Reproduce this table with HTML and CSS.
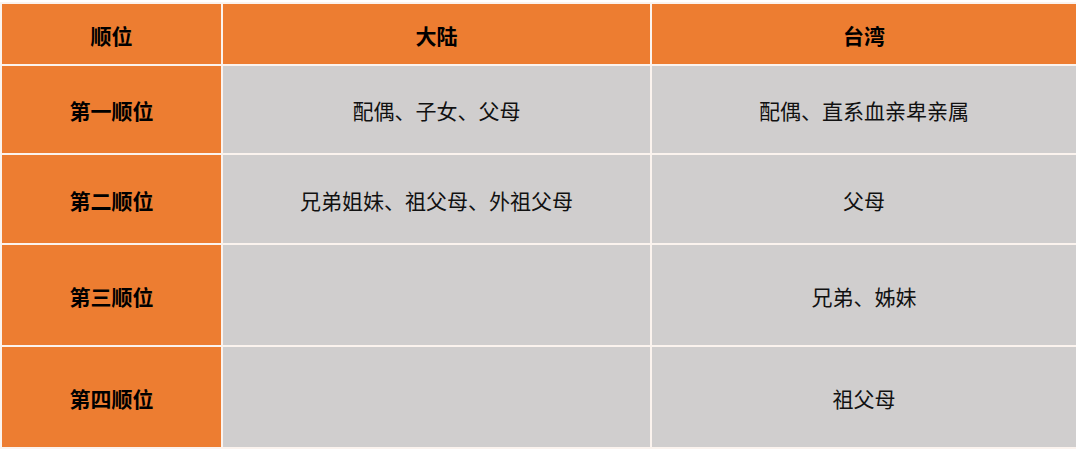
FILE: index.html
```html
<!DOCTYPE html>
<html lang="zh-CN">
<head>
<meta charset="utf-8">
<title>继承顺位</title>
<link rel="stylesheet" href="styles.css">
</head>
<body>
<div class="table">
  <div class="cell head">顺位</div>
  <div class="cell head">大陆</div>
  <div class="cell head">台湾</div>

  <div class="cell side">第一顺位</div>
  <div class="cell body">配偶、子女、父母</div>
  <div class="cell body">配偶、直系血亲卑亲属</div>

  <div class="cell side">第二顺位</div>
  <div class="cell body">兄弟姐妹、祖父母、外祖父母</div>
  <div class="cell body">父母</div>

  <div class="cell side">第三顺位</div>
  <div class="cell body"></div>
  <div class="cell body">兄弟、姊妹</div>

  <div class="cell side">第四顺位</div>
  <div class="cell body"></div>
  <div class="cell body">祖父母</div>
</div>
</body>
</html>
```
FILE: styles.css
```css
html, body {
  margin: 0;
  padding: 0;
  background: #ffffff;
}
body {
  font-family: "Noto Sans CJK SC", "Noto Sans", sans-serif;
}
.table {
  margin-top: 2px;
  width: 1076px;
  padding: 2px;
  box-sizing: border-box;
  background: #fbf3ee;
  display: grid;
  grid-template-columns: 219px 427px 424px;
  grid-template-rows: 60px 87px 88px 100px 100px;
  gap: 2px;
}
.cell {
  display: flex;
  align-items: center;
  justify-content: center;
  font-size: 21px;
  color: #111111;
  padding-top: 1px;
  box-sizing: border-box;
}
.head, .side {
  background: #ed7d31;
  font-weight: 700;
  color: #000000;
}
.body {
  background: #d0cece;
  font-weight: 400;
}
```
